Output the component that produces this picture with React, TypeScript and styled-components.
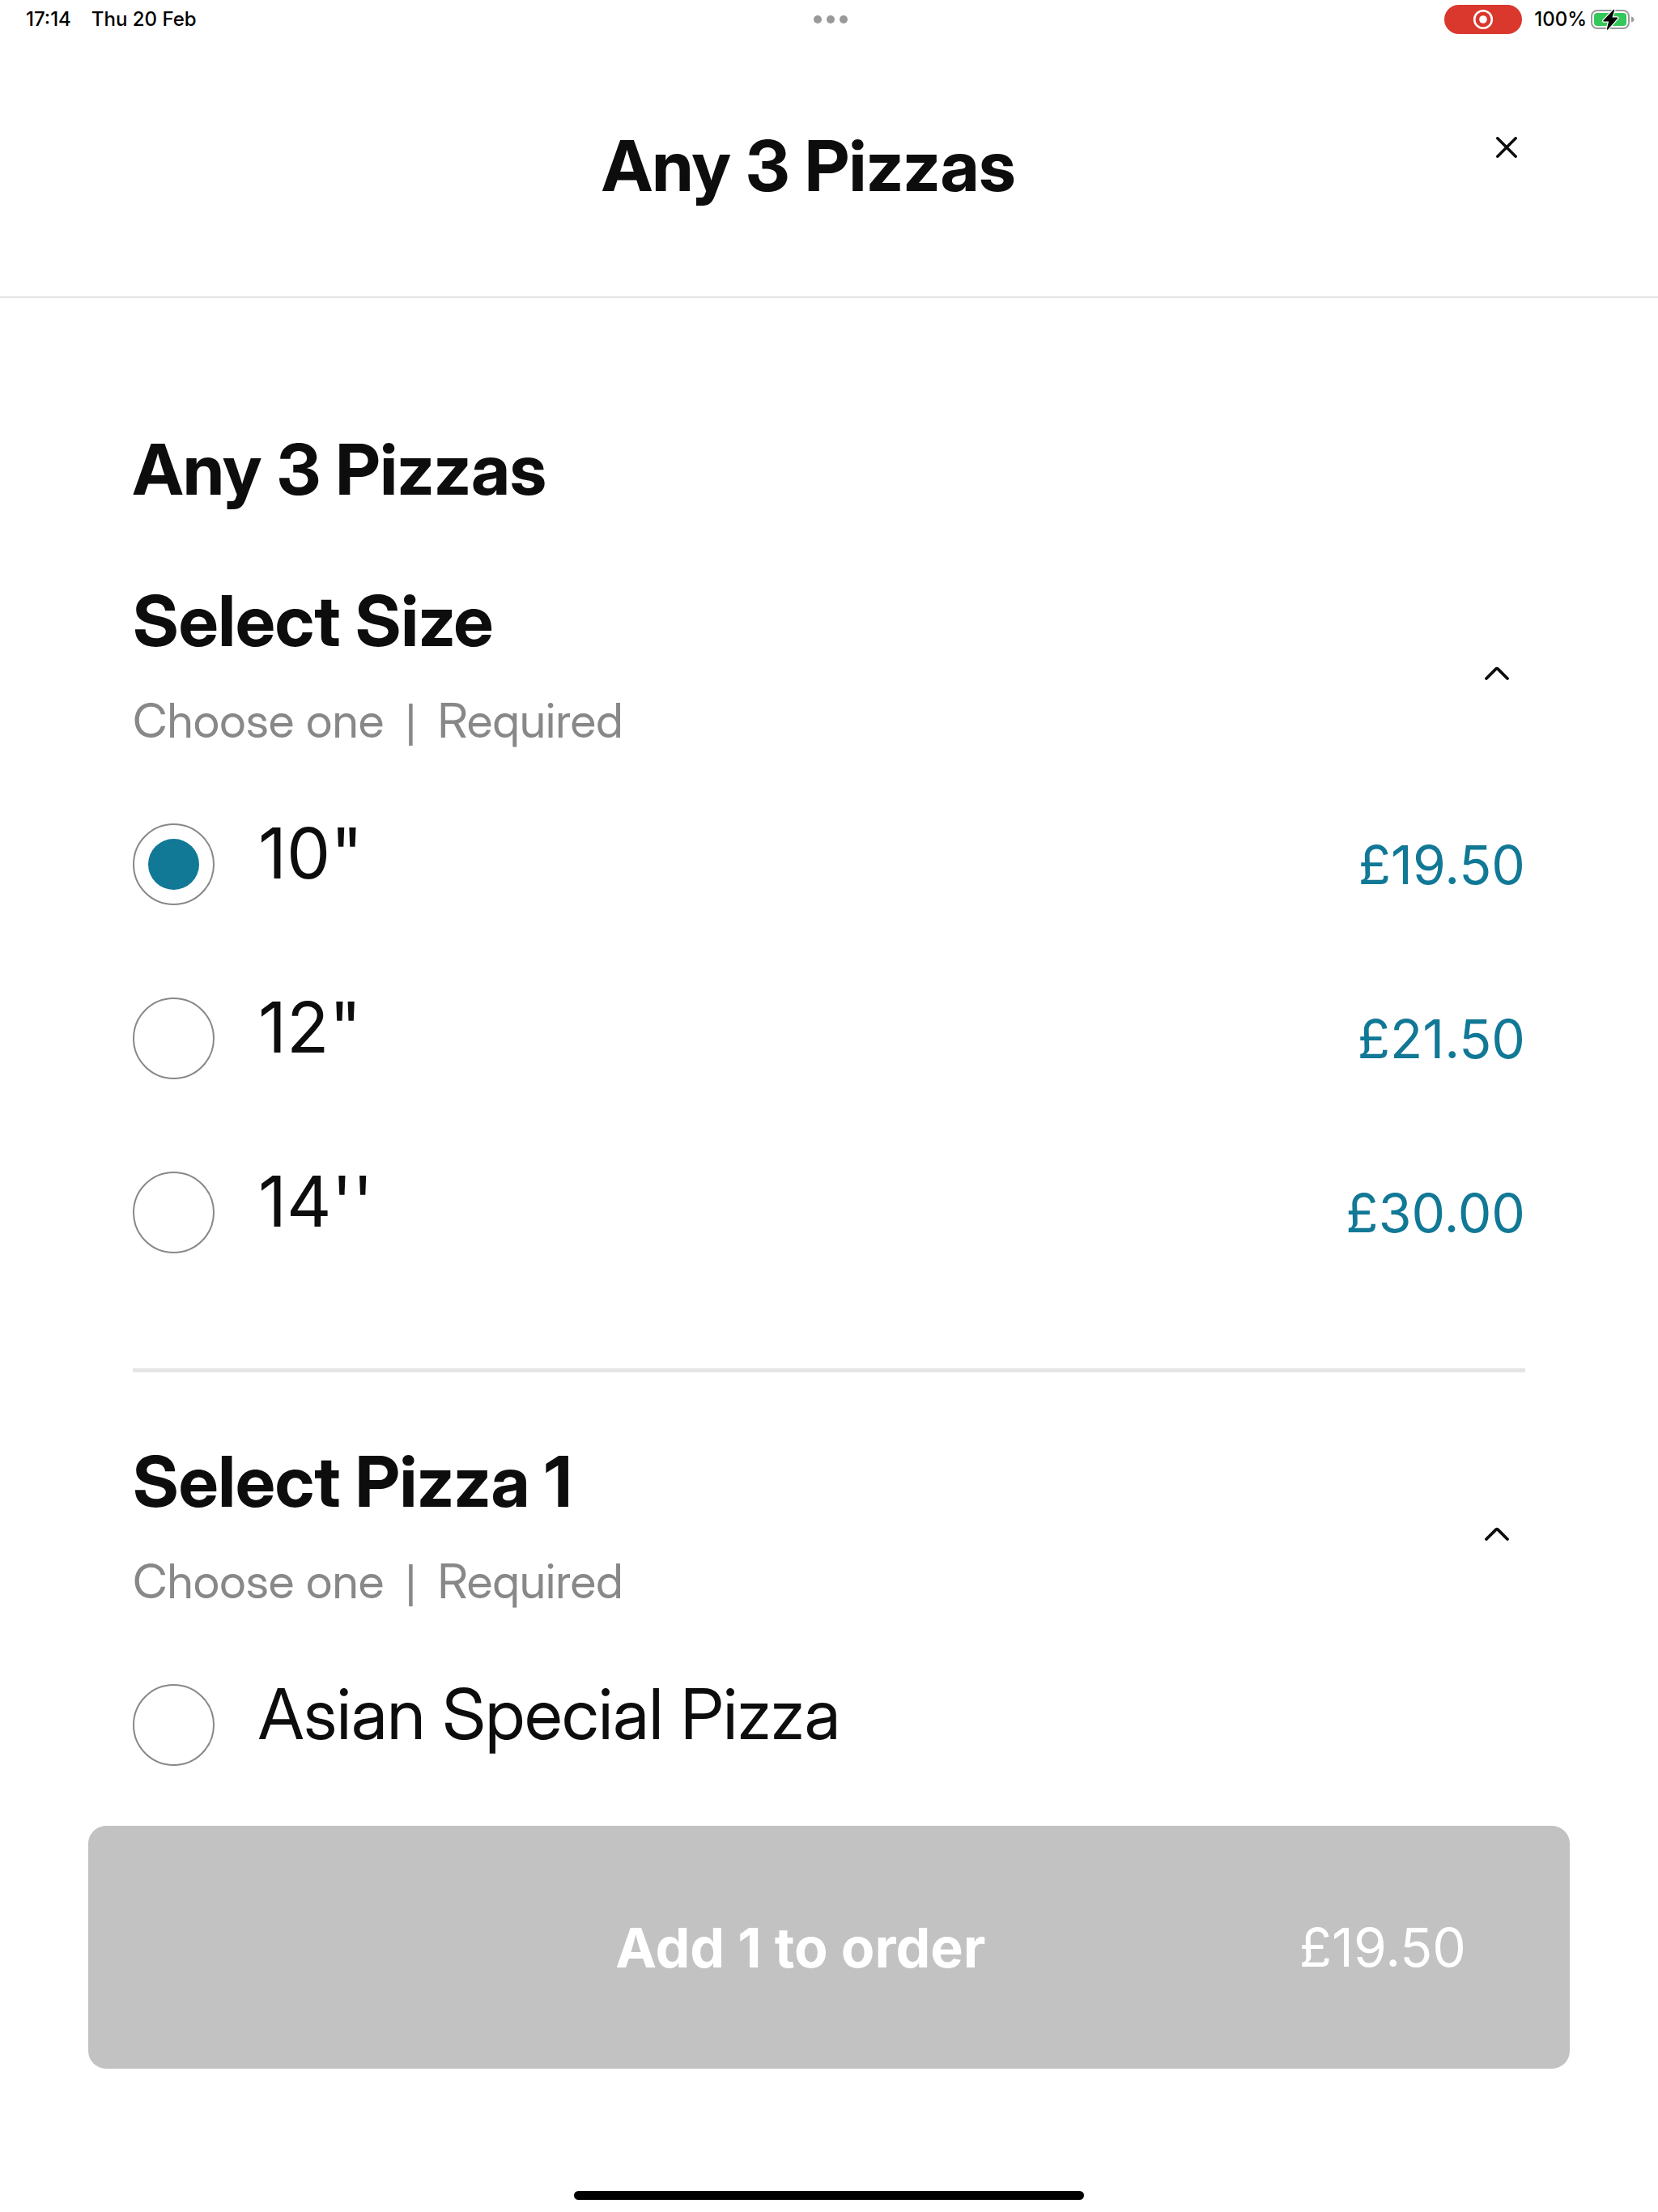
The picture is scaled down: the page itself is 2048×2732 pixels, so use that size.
import React, { useState } from "react";
import styled, { createGlobalStyle } from "styled-components";

const ink = "#0d0d0d";
const teal = "#117896";
const muted = "#888888";
const rule = "#e5e5e5";
const body = 'Inter, "Liberation Sans", sans-serif';
const display = '"Inter Display", Inter, "Liberation Sans", sans-serif';

const GlobalStyle = createGlobalStyle`
  *, *::before, *::after { box-sizing: border-box; }
  body {
    margin: 0;
    background: #ffffff;
    color: ${ink};
    font-family: ${body};
  }
  h1, h2, h3, p { margin: 0; }
  button { font: inherit; border: 0; padding: 0; background: none; cursor: pointer; }
`;

const Screen = styled.div`
  display: flex;
  flex-direction: column;
  min-height: 100vh;
`;

const StatusBar = styled.div`
  display: grid;
  grid-template-columns: 1fr auto 1fr;
  align-items: center;
  height: 48px;
  padding: 0 29px 0 32px;
  color: #000000;
  font-size: 24px;
  line-height: 28px;
  font-weight: 500;
`;

const StatusGroup = styled.div<{ $end?: boolean }>`
  display: flex;
  align-items: center;
  justify-content: ${(p) => (p.$end ? "flex-end" : "flex-start")};
  gap: ${(p) => (p.$end ? "5px" : "25px")};
`;

const Dots = styled.div`
  display: flex;
  gap: 6px;
`;

const Dot = styled.span`
  width: 10px;
  height: 10px;
  border-radius: 50%;
  background: #999999;
`;

const RecordPill = styled.span`
  display: flex;
  align-items: center;
  justify-content: center;
  width: 96px;
  height: 36px;
  margin-right: 10px;
  border-radius: 18px;
  background: #da372d;
`;

const Header = styled.header`
  display: flex;
  align-items: flex-start;
  padding: 105px 164px 109px;
  border-bottom: 2px solid ${rule};
`;

const HeaderTitle = styled.h1`
  flex: 1;
  text-align: center;
  font-family: ${display};
  font-size: 87px;
  line-height: 104px;
  font-weight: 700;
`;

const CloseButton = styled.button`
  display: flex;
  align-items: center;
  justify-content: flex-end;
  width: 50px;
  height: 50px;
  margin-top: 4px;
  padding-right: 10px;
`;

const Main = styled.main`
  flex: 1;
  padding: 160px 164px 74px;
`;

const Title = styled.h2`
  font-family: ${display};
  font-size: 87px;
  line-height: 104px;
  font-weight: 700;
`;

const Group = styled.section`
  padding: 83px 0 142px;
  & + & { border-top: 5px solid ${rule}; }
  &:last-child { padding-bottom: 0; }
`;

const GroupHeader = styled.div`
  display: flex;
  align-items: center;
  justify-content: space-between;
  margin-bottom: 92px;
`;

const GroupTitle = styled.h3`
  margin-bottom: 36px;
  font-family: ${display};
  font-size: 87px;
  line-height: 104px;
  font-weight: 700;
`;

const Hint = styled.p`
  display: flex;
  gap: 26px;
  font-family: ${display};
  font-size: 59px;
  line-height: 70px;
  color: ${muted};
`;

const Separator = styled.span`
  font-family: "Liberation Sans", Arial, sans-serif;
  font-size: 55px;
`;

const Toggle = styled.button`
  display: flex;
  justify-content: center;
  width: 70px;
  padding-top: 24px;
`;

const Options = styled.div`
  display: flex;
  flex-direction: column;
  gap: 114px;
`;

const Option = styled.label`
  display: flex;
  align-items: center;
  gap: 54px;
  height: 101px;
  cursor: pointer;
`;

const Radio = styled.input`
  appearance: none;
  flex: none;
  width: 101px;
  height: 101px;
  margin: 0;
  padding: 17px;
  border: 2px solid ${muted};
  border-radius: 50%;
  background-clip: content-box;
  &:checked { background-color: ${teal}; }
`;

const OptionName = styled.span<{ $numeric?: boolean }>`
  flex: 1;
  align-self: flex-start;
  font-family: ${(p) => (p.$numeric ? body : display)};
  font-size: 86px;
  line-height: 74px;
`;

const OptionPrice = styled.span`
  font-size: 66px;
  line-height: 80px;
  color: ${teal};
`;

const Footer = styled.footer`
  padding: 0 109px 151px;
`;

const AddButton = styled.button`
  display: flex;
  align-items: center;
  width: 100%;
  height: 300px;
  padding: 0 128px 0 264px;
  border-radius: 22px;
  background: #c2c2c2;
  color: #ffffff;
`;

const AddLabel = styled.span`
  flex: 1;
  text-align: center;
  font-size: 68px;
  line-height: 82px;
  font-weight: 700;
`;

const AddPrice = styled.span`
  font-size: 66px;
  line-height: 82px;
`;

const HomeIndicator = styled.div`
  width: 630px;
  height: 11px;
  margin: 0 auto 15px;
  border-radius: 6px;
  background: #000000;
`;

const Battery = () => (
  <svg width="54" height="28" viewBox="0 0 54 28" aria-hidden="true">
    <rect x="1" y="3" width="46" height="22" rx="7" fill="none" stroke="#9b9b9b" strokeWidth="2" />
    <rect x="4" y="6" width="40" height="16" rx="4" fill="#34c759" />
    <path d="M50 10.500 Q53.500 11.500 53.500 14 Q53.500 16.500 50 17.500 Z" fill="#9b9b9b" />
    <path
      d="M28.500 2.500 L16 15.800 H23 L20.500 26 L32.500 12.300 H25.500 Z"
      fill="none"
      stroke="#ffffff"
      strokeWidth="4"
      strokeLinejoin="round"
    />
    <path
      d="M28.500 2.500 L16 15.800 H23 L20.500 26 L32.500 12.300 H25.500 Z"
      fill="#000000"
      stroke="#000000"
      strokeWidth="1.400"
      strokeLinejoin="round"
    />
  </svg>
);

const RecordIcon = () => (
  <svg width="26" height="26" viewBox="0 0 26 26" aria-hidden="true">
    <circle cx="13" cy="13" r="10.800" fill="none" stroke="#ffffff" strokeWidth="2.600" />
    <circle cx="13" cy="13" r="4.800" fill="#ffffff" />
  </svg>
);

const CloseIcon = () => (
  <svg width="26" height="26" viewBox="0 0 26 26" aria-hidden="true">
    <path d="M1.800 1.800 L24.200 24.200 M24.200 1.800 L1.800 24.200" stroke={ink} strokeWidth="3.500" strokeLinecap="round" />
  </svg>
);

const ChevronUp = () => (
  <svg width="30" height="18" viewBox="0 0 30 18" aria-hidden="true">
    <path
      d="M2 15 L13.600 3.400 Q15 2.200 16.400 3.400 L28 15"
      fill="none"
      stroke={ink}
      strokeWidth="3.800"
      strokeLinecap="round"
      strokeLinejoin="round"
    />
  </svg>
);

type Choice = { name: string; price?: string };

const sizes: Choice[] = [
  { name: '10"', price: "£19.50" },
  { name: '12"', price: "£21.50" },
  { name: "14''", price: "£30.00" },
];

const pizzas: Choice[] = [{ name: "Asian Special Pizza" }];

type ChoiceGroupProps = {
  id: string;
  title: string;
  choices: Choice[];
  initial?: string;
  numeric?: boolean;
};

function ChoiceGroup({ id, title, choices, initial = "", numeric }: ChoiceGroupProps) {
  const [selected, setSelected] = useState(initial);
  const [open, setOpen] = useState(true);

  return (
    <Group aria-labelledby={`${id}-title`}>
      <GroupHeader>
        <div>
          <GroupTitle id={`${id}-title`}>{title}</GroupTitle>
          <Hint>
            <span>Choose one</span>
            <Separator>|</Separator>
            <span>Required</span>
          </Hint>
        </div>
        <Toggle type="button" aria-label={`Toggle ${title}`} aria-expanded={open} onClick={() => setOpen(!open)}>
          <ChevronUp />
        </Toggle>
      </GroupHeader>
      {open && (
        <Options role="radiogroup" aria-labelledby={`${id}-title`}>
          {choices.map((choice) => (
            <Option key={choice.name}>
              <Radio
                type="radio"
                name={id}
                value={choice.name}
                checked={selected === choice.name}
                onChange={() => setSelected(choice.name)}
              />
              <OptionName $numeric={numeric}>{choice.name}</OptionName>
              {choice.price && <OptionPrice>{choice.price}</OptionPrice>}
            </Option>
          ))}
        </Options>
      )}
    </Group>
  );
}

export default function App() {
  return (
    <>
      <GlobalStyle />
      <Screen>
        <StatusBar>
          <StatusGroup>
            <span>17:14</span>
            <span>Thu 20 Feb</span>
          </StatusGroup>
          <Dots>
            <Dot />
            <Dot />
            <Dot />
          </Dots>
          <StatusGroup $end>
            <RecordPill>
              <RecordIcon />
            </RecordPill>
            <span>100%</span>
            <Battery />
          </StatusGroup>
        </StatusBar>
        <Header>
          <HeaderTitle>Any 3 Pizzas</HeaderTitle>
          <CloseButton type="button" aria-label="Close">
            <CloseIcon />
          </CloseButton>
        </Header>
        <Main>
          <Title>Any 3 Pizzas</Title>
          <ChoiceGroup id="size" title="Select Size" choices={sizes} initial={'10"'} numeric />
          <ChoiceGroup id="pizza-1" title="Select Pizza 1" choices={pizzas} />
        </Main>
        <Footer>
          <AddButton type="button">
            <AddLabel>Add 1 to order</AddLabel>
            <AddPrice>£19.50</AddPrice>
          </AddButton>
        </Footer>
        <HomeIndicator />
      </Screen>
    </>
  );
}
